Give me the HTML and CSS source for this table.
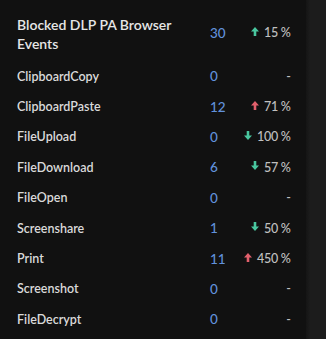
FILE: index.html
```html
<!DOCTYPE html>
<html>
<head>
<meta charset="utf-8">
<link rel="stylesheet" href="styles.css">
</head>
<body>
<div class="page">
  <div class="panel">
    <div class="table">
      <div class="label title">Blocked DLP PA Browser Events</div>
      <div class="num">30</div>
      <div class="chg"><svg class="arr up" viewBox="0 0 8 9"><path d="M4 0 L8 4.5 L5.3 4.5 L5.3 9 L2.7 9 L2.7 4.5 L0 4.5 Z"/></svg><span>15 %</span></div>

      <div class="label">ClipboardCopy</div>
      <div class="num">0</div>
      <div class="chg">-</div>

      <div class="label">ClipboardPaste</div>
      <div class="num">12</div>
      <div class="chg"><svg class="arr up bad" viewBox="0 0 8 9"><path d="M4 0 L8 4.5 L5.3 4.5 L5.3 9 L2.7 9 L2.7 4.5 L0 4.5 Z"/></svg><span>71 %</span></div>

      <div class="label">FileUpload</div>
      <div class="num">0</div>
      <div class="chg"><svg class="arr down" viewBox="0 0 8 9"><path d="M4 9 L8 4.5 L5.3 4.5 L5.3 0 L2.7 0 L2.7 4.5 L0 4.5 Z"/></svg><span>100 %</span></div>

      <div class="label">FileDownload</div>
      <div class="num">6</div>
      <div class="chg"><svg class="arr down" viewBox="0 0 8 9"><path d="M4 9 L8 4.5 L5.3 4.5 L5.3 0 L2.7 0 L2.7 4.5 L0 4.5 Z"/></svg><span>57 %</span></div>

      <div class="label">FileOpen</div>
      <div class="num">0</div>
      <div class="chg">-</div>

      <div class="label">Screenshare</div>
      <div class="num">1</div>
      <div class="chg"><svg class="arr down" viewBox="0 0 8 9"><path d="M4 9 L8 4.5 L5.3 4.5 L5.3 0 L2.7 0 L2.7 4.5 L0 4.5 Z"/></svg><span>50 %</span></div>

      <div class="label">Print</div>
      <div class="num">11</div>
      <div class="chg"><svg class="arr up bad" viewBox="0 0 8 9"><path d="M4 0 L8 4.5 L5.3 4.5 L5.3 9 L2.7 9 L2.7 4.5 L0 4.5 Z"/></svg><span>450 %</span></div>

      <div class="label">Screenshot</div>
      <div class="num">0</div>
      <div class="chg">-</div>

      <div class="label">FileDecrypt</div>
      <div class="num">0</div>
      <div class="chg">-</div>
    </div>
  </div>
  <div class="strip"></div>
</div>
</body>
</html>
```
FILE: styles.css
```css
html, body {
  margin: 0;
  padding: 0;
  background: #111111;
}
body {
  font-family: Lato, "Open Sans", sans-serif;
  width: 326px;
  height: 339px;
  overflow: hidden;
}
.page {
  display: flex;
  height: 339px;
}
.panel {
  width: 306px;
  background: #111111;
  padding: 15px 21px 0 17px;
  box-sizing: border-box;
}
.strip {
  flex: 1;
  background: linear-gradient(to right, #151515, #1c1c1c 4px, #1c1c1c);
}
.table {
  display: grid;
  grid-template-columns: 193px 34px 1fr;
  grid-template-rows: 46px;
  grid-auto-rows: 30.4px;
  align-items: center;
}
.label {
  font-size: 12.5px;
  font-weight: 600;
  color: #dadada;
  white-space: nowrap;
}
.title {
  font-size: 14px;
  line-height: 19px;
  font-weight: 600;
  color: #e6e6e6;
  white-space: normal;
  align-self: start;
}
.table > .num:nth-child(2),
.table > .chg:nth-child(3) {
  align-self: start;
  margin-top: 10px;
}
.num {
  font-size: 13.5px;
  color: #6191dc;
  font-weight: 500;
}
.chg {
  justify-self: end;
  display: flex;
  align-items: center;
  gap: 5px;
  font-size: 12.5px;
  color: #c0c0c0;
  font-weight: 500;
  white-space: nowrap;
  letter-spacing: -0.3px;
}
.arr {
  width: 8px;
  height: 9px;
  fill: #49c79f;
  margin-top: -3px;
}
.arr.bad {
  fill: #e2606c;
}
```
